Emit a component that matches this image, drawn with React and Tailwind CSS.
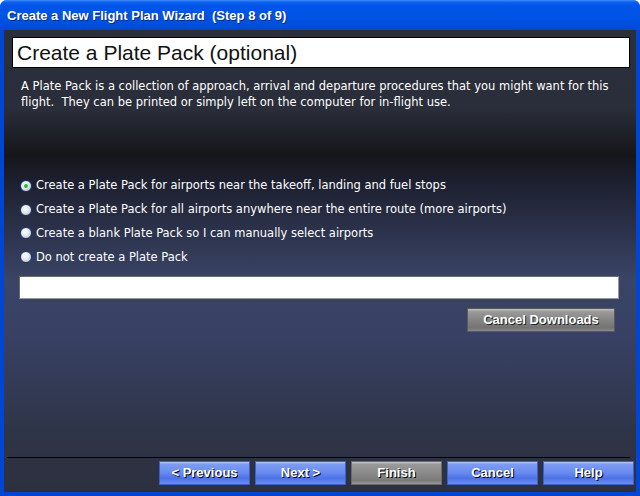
import React from "react";

const font = { fontFamily: '"Liberation Sans", Arial, sans-serif' };
const body = { fontFamily: '"DejaVu Sans", Verdana, sans-serif' };

function Radio({ checked }) {
  return (
    <span className="relative inline-block w-[12px] h-[12px] rounded-full border border-[#1c3a6a] bg-[radial-gradient(circle_at_40%_35%,#ffffff_0%,#e6e8ee_45%,#aeb4c4_100%)] shrink-0">
      {checked && (
        <span className="absolute left-[3px] top-[3px] w-[4px] h-[4px] rounded-full bg-[#22c02a]" />
      )}
    </span>
  );
}

function BlueButton({ children, gray }) {
  const cls = gray
    ? "bg-[linear-gradient(to_bottom,#c8c8c8_0%,#9a9a9a_10%,#8a8a8a_50%,#7a7a7a_85%,#9a9a9a_100%)] border-[#6a6a6a]"
    : "bg-[linear-gradient(to_bottom,#b4c8ff_0%,#7d9cf3_10%,#6b8cf0_45%,#4d72e6_75%,#6a8ff2_100%)] border-[#3d5fc8]";
  return (
    <div
      className={`w-[91px] h-[24px] flex items-center justify-center border ${cls} text-white font-bold text-[13px] [text-shadow:1px_1px_0_#000]`}
    >
      {children}
    </div>
  );
}

export default function App() {
  const options = [
    "Create a Plate Pack for airports near the takeoff, landing and fuel stops",
    "Create a Plate Pack for all airports anywhere near the entire route (more airports)",
    "Create a blank Plate Pack so I can manually select airports",
    "Do not create a Plate Pack",
  ];
  return (
    <div style={font} className="w-[640px] h-[496px] flex flex-col bg-[#0046d5] rounded-t-[7px] overflow-hidden">
      <div className="h-[30px] shrink-0 flex items-center pl-[7px] bg-[linear-gradient(to_bottom,#3d8bf8_0%,#0a5ff0_8%,#0055e8_20%,#0053e4_60%,#004fdc_85%,#0048d0_100%)]">
        <span className="text-white font-bold text-[13px] whitespace-pre [text-shadow:1px_1px_0_#0a2a80] pt-[1px]">
          Create a New Flight Plan Wizard  (Step 8 of 9)
        </span>
      </div>
      <div className="flex-1 mx-[4px] mb-[4px] flex flex-col bg-[linear-gradient(to_bottom,#2b2f3c_0%,#2a2e3a_17%,#151619_27%,#1d2030_33%,#3a4466_54%,#384164_66%,#2f3549_86%,#2c303e_100%)]">
        <div className="mt-[7px] ml-[8px] mr-[6px] h-[31px] bg-white border border-black flex items-center pl-[4px]">
          <span className="text-[21px] text-[#111] leading-none">Create a Plate Pack (optional)</span>
        </div>
        <div style={body} className="mt-[10px] ml-[17px] mr-[6px] text-white text-[11.5px] leading-[16px]">
          <p className="whitespace-nowrap">A Plate Pack is a collection of approach, arrival and departure procedures that you might want for this</p>
          <p className="whitespace-pre">flight.  They can be printed or simply left on the computer for in-flight use.</p>
        </div>
        <div style={body} className="mt-[64px] ml-[16px] flex flex-col">
          {options.map((o, i) => (
            <div key={i} className="h-[23.8px] flex items-center gap-[4px]">
              <Radio checked={i === 0} />
              <span className="text-white text-[11.5px]">{o}</span>
            </div>
          ))}
        </div>
        <div className="mt-[7px] ml-[15px] w-[600px] h-[23px] bg-white border border-[#9a9a9a] border-t-[#6a6a6a] border-l-[#6a6a6a]" />
        <div className="mt-[9px] ml-[463px] w-[148px] h-[24px] flex items-center justify-center border border-[#5a5a5a] bg-[linear-gradient(to_bottom,#c0c0c0_0%,#9a9a9a_12%,#858585_50%,#737373_85%,#8a8a8a_100%)] text-white font-bold text-[13px] [text-shadow:1px_1px_0_#222]">
          Cancel Downloads
        </div>
        <div className="flex-1" />
        <div className="ml-[3px] mr-[6px] h-[1px] bg-black" />
        <div className="mt-[3px] mb-[7px] ml-[155px] flex gap-[5px]">
          <BlueButton>&lt; Previous</BlueButton>
          <BlueButton>Next &gt;</BlueButton>
          <BlueButton gray>Finish</BlueButton>
          <BlueButton>Cancel</BlueButton>
          <BlueButton>Help</BlueButton>
        </div>
      </div>
    </div>
  );
}
